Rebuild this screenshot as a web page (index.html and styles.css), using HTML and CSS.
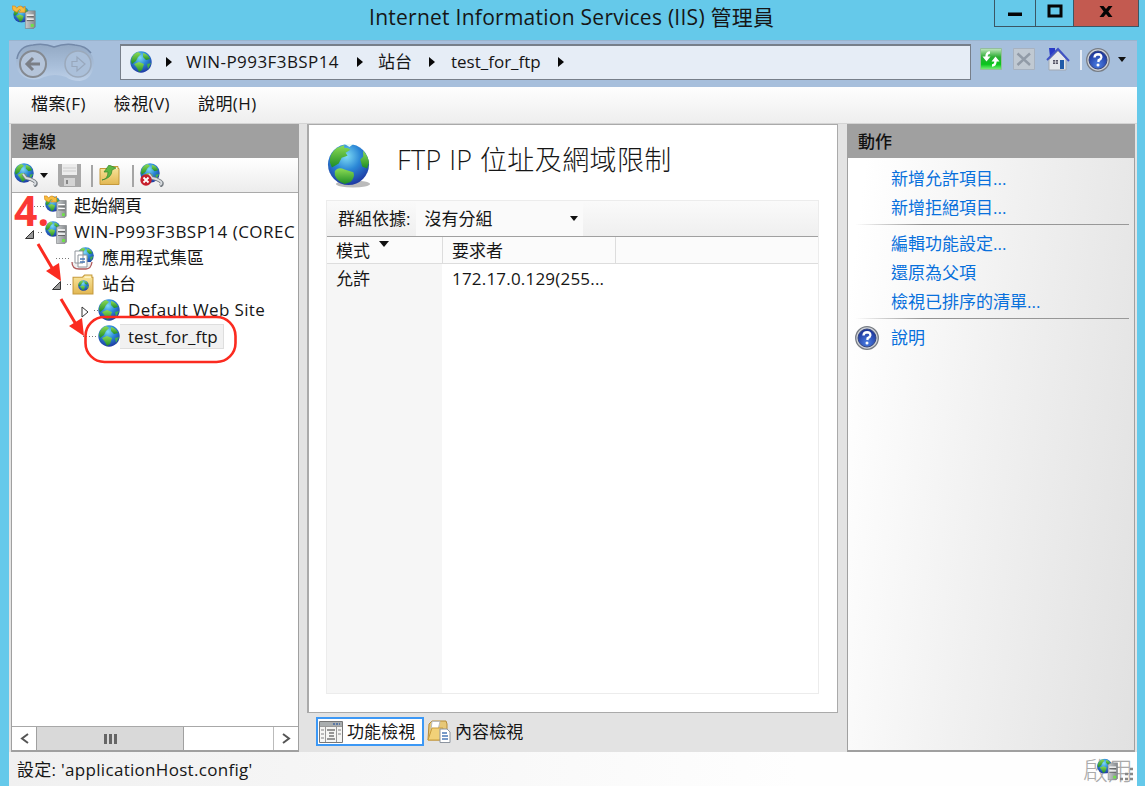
FILE: index.html
```html
<!DOCTYPE html>
<html lang="zh-Hant">
<head>
<meta charset="utf-8">
<title>Internet Information Services (IIS) 管理員</title>
<link rel="stylesheet" href="styles.css">
</head>
<body>
<svg class="defs" width="0" height="0">
  <defs>
    <radialGradient id="sea" cx=".45" cy=".3" r=".75"><stop offset="0" stop-color="#7fdcf5"/><stop offset=".45" stop-color="#2b87d6"/><stop offset="1" stop-color="#1c2f9c"/></radialGradient>
    <linearGradient id="land" x1="0" y1="0" x2="0" y2="1"><stop offset="0" stop-color="#8ddc55"/><stop offset="1" stop-color="#1d8c25"/></linearGradient>
    <linearGradient id="tower" x1="0" y1="0" x2="1" y2="0"><stop offset="0" stop-color="#c9ccce"/><stop offset="1" stop-color="#85898c"/></linearGradient>
    <linearGradient id="manila" x1="0" y1="0" x2="0" y2="1"><stop offset="0" stop-color="#fae79f"/><stop offset="1" stop-color="#e2b752"/></linearGradient>
    <linearGradient id="green" x1="0" y1="0" x2="0" y2="1"><stop offset="0" stop-color="#c3e8c0"/><stop offset=".4" stop-color="#2eae35"/><stop offset=".75" stop-color="#08c51b"/><stop offset="1" stop-color="#7df07c"/></linearGradient>
    <radialGradient id="blue" cx=".5" cy=".75" r=".7"><stop offset="0" stop-color="#4b7fe3"/><stop offset="1" stop-color="#1b3399"/></radialGradient>
    <linearGradient id="pod" x1="0" y1="0" x2="0" y2="1"><stop offset="0" stop-color="#93a9c4"/><stop offset=".6" stop-color="#a9bfda"/><stop offset="1" stop-color="#bdd0e8"/></linearGradient>
  </defs>
  <symbol id="globe" viewBox="0 0 44 44">
    <circle cx="22" cy="22" r="21" fill="url(#sea)"/>
    <path d="M3 20Q2 11 10 5L18 2Q16 6 21 5L24 7L19 10L21 13L15 15L12 21L5 25Z" fill="url(#land)"/>
    <path d="M37 8Q42 13 43 20L41 26L36 24L34 17L37 14Z" fill="url(#land)"/>
    <path d="M8 29Q11 24 18 27L27 30Q29 35 24 40L18 42Q10 39 8 33Z" fill="url(#land)"/>
    <path d="M18 1L23 4L27 1Z" fill="#e9fbf5"/>
  </symbol>
  <symbol id="small-globe" viewBox="0 0 22 22">
    <circle cx="11" cy="11" r="10.700" fill="url(#sea)"/>
    <path d="M1 10Q2 3 8 1L11 3L8 6L6 10L2 13Z" fill="url(#land)"/>
    <path d="M13 2Q18 3 20 8L16 9L13 6Z" fill="url(#land)"/>
    <path d="M4 13L9 11L14 13L12 19L9 21L7 17Z" fill="url(#land)"/>
    <path d="M17 13L21 12L18 18Z" fill="#43b049"/>
  </symbol>
  <symbol id="server" viewBox="0 0 11 19">
    <path d="M1 2L4 .5H10.500V17L9 18.500H.5V3Z" fill="url(#tower)" stroke="#777b7e" stroke-width=".6"/>
    <path d="M2 5H9M2 9H9" stroke="#fff" stroke-width="1.300"/><path d="M2 6.500H9M2 10.500H9" stroke="#555" stroke-width=".8"/>
    <path d="M6 14H9V17H6Z" fill="#6fe04a"/>
  </symbol>
  <symbol id="site-server" viewBox="0 0 23 23">
    <use href="#small-globe" x="1" y="0" width="16" height="16"/><use href="#server" x="12" y="4" width="11" height="19"/>
  </symbol>
  <symbol id="home-server" viewBox="0 0 23 23">
    <use href="#small-globe" x="1" y="1" width="16" height="16"/><use href="#server" x="12" y="5" width="11" height="18"/>
    <path d="M0 1H3L4.500 3Q8-1 11 3L12.500 1V7H6.500L8.500 5Q6.500 3 5 7L1 5Z" fill="#f7bd40" stroke="#dc8b1b" stroke-width=".7"/>
  </symbol>
  <symbol id="help" viewBox="0 0 24 24">
    <circle cx="12" cy="12" r="11.3" fill="#d0d3d8" stroke="#777c84" stroke-width="1.3"/><circle cx="12" cy="12" r="9" fill="url(#blue)" stroke="#35477f"/>
    <path d="M8.500 9.500Q8.700 6.300 12.200 6.300Q15.600 6.500 15.300 9.400Q15 11.300 12.700 12.200L12.300 14" fill="none" stroke="#fff" stroke-width="2.4"/><circle cx="12" cy="17" r="1.5" fill="#fff"/>
  </symbol>
  <symbol id="folder" viewBox="0 0 21 20">
    <path d="M1 3H10L12 1H19V3H20V19H1Z" fill="url(#manila)" stroke="#c5993b"/><path d="M12 3H18" stroke="#fff9df"/>
  </symbol>
  <symbol id="connect" viewBox="0 0 24 24">
    <use href="#small-globe" x="0" y="0" width="20" height="20"/>
    <path d="M9 11L12 15L16 16L20 18Q24 21 20 23" fill="none" stroke="#777d83" stroke-width="3.6"/><path d="M9 11L12 15L16 16L20 18Q23 20 20 22" fill="none" stroke="#d9dde0" stroke-width="1.9"/>
  </symbol>
</svg>

<div class="window">
  <header class="titlebar">
    <svg class="app-icon" width="24" height="24"><use href="#home-server"/></svg>
    <h1 class="title">Internet Information Services (IIS) 管理員</h1>
    <div class="controls">
      <div class="control minimize"><svg width="16" height="16"><path d="M1 12.500H15V16H1Z"/></svg></div>
      <div class="control maximize"><svg width="16" height="16"><path d="M2 4H14V14H2Z" fill="none" stroke="#050505" stroke-width="3"/></svg></div>
      <div class="control close"><svg width="16" height="16"><path d="M1.500 4H5.500L8 7L10.500 4H14.500L10.300 9.500L14.500 15H10.500L8 12L5.500 15H1.500L5.700 9.500Z"/></svg></div>
    </div>
  </header>

  <div class="frame">
    <nav class="address-row">
      <svg class="history" width="80" height="39" viewBox="0 0 80 39">
        <path d="M1 19Q1 5 18 2Q29 0 39 4Q50 0 60 2Q78 5 79 20Q78 36 65 38Q56 38 51 34Q40 30 29 34Q19 39 9 34Q1 29 1 19Z" fill="url(#pod)"/>
        <path d="M2 16Q4 3 18 2Q29 0 39 4Q50 0 60 2Q71 3 76 10" fill="none" stroke="#7389a9" stroke-width="1.5"/>
        <circle cx="18" cy="21" r="13" fill="#b5c5da" stroke="#858a91" stroke-width="2"/>
        <path d="M25 21H13M18 15L12 21L18 27" fill="none" stroke="#7b7f86" stroke-width="3"/>
        <circle cx="63" cy="21" r="13" fill="#abc0da" stroke="#9ba9bb" stroke-width="1.5"/>
        <path d="M57 18.500H62V14L70 21L62 28V23.500H57Z" fill="none" stroke="#98a7bc" stroke-width="1.200"/>
      </svg>
      <div class="address">
        <svg width="22" height="22"><use href="#small-globe"/></svg>
        <i class="tri"></i><span class="crumb crumb-host">WIN-P993F3BSP14</span>
        <i class="tri"></i><span class="crumb">站台</span>
        <i class="tri"></i><span class="crumb crumb-site">test_for_ftp</span>
        <i class="tri"></i>
      </div>
      <div class="quick">
        <svg width="22" height="22" viewBox="0 0 22 22"><path d="M.5 .5H21.500V21.500H.5Z" fill="url(#green)" stroke="#93bd9d"/><path d="M10 4.500Q6.500 4.500 6.500 9M12 17.500Q15.500 17.500 15.500 13" stroke="#fff" stroke-width="2.400" fill="none"/><path d="M2.500 8.500H10.500L6.500 13.500ZM11.500 13.500H19.500L15.500 8.500Z" fill="#fff"/></svg>
        <svg width="22" height="22" viewBox="0 0 22 22"><path d="M.5 .5H21.500V21.500H.5Z" fill="#c0c9d2" stroke="#a7b2c0"/><path d="M4.500 5.500L17 17M17 5.500L4.500 17" stroke="#919ba7" stroke-width="2.400"/></svg>
        <svg class="house" width="24" height="24" viewBox="0 0 24 24"><path d="M4 12L12 4L20 12V23H3V12Z" fill="#e5e8ec" stroke="#a1a8b2"/><path d="M3 1H9V6L4 10Z" fill="#293bc7"/><path d="M1 13L12 2L23 14" fill="none" stroke="#4052c4" stroke-width="2"/><path d="M7 13H12V17H7Z" fill="#556"/><path d="M14 13H18V22H14Z" fill="#205aa8"/><path d="M9.500 13V17M7 15H12" stroke="#fff" stroke-width=".6"/></svg>
        <i class="quick-divider"></i>
        <svg width="24" height="24"><use href="#help"/></svg>
        <i class="caret"></i>
      </div>
    </nav>

    <div class="menubar"><span>檔案(F)</span><span>檢視(V)</span><span>說明(H)</span></div>

    <main class="workspace">
      <section class="pane connections">
        <h2 class="pane-title">連線</h2>
        <div class="toolbar">
          <svg width="24" height="24"><use href="#connect"/></svg><i class="caret caret-small"></i>
          <svg class="save" width="23" height="23" viewBox="0 0 23 23"><path d="M0 0H23V23H2L0 21Z" fill="#a8a8a8"/><path d="M4 0H19V11H4Z" fill="#ececec"/><path d="M5 4H18M5 7H18" stroke="#ccc"/><path d="M6 14H17V22H6Z" fill="#d4d4d4"/><path d="M8 16H10V20H8Z" fill="#888"/></svg>
          <i class="tool-divider"></i>
          <svg class="up" width="21" height="21" viewBox="0 0 21 21"><use href="#folder" width="21" height="21"/><path d="M3 15Q9 14 9 7H5L10 0L17 3L13 5Q13 13 3 15Z" fill="#5cb743" stroke="#35862c" stroke-width=".7"/></svg>
          <i class="tool-divider"></i>
          <svg class="disconnect" width="24" height="24"><use href="#connect"/><circle cx="6" cy="17" r="5.700" fill="#c61f2c"/><path d="M3.500 14.500L8.500 19.500M8.500 14.500L3.500 19.500" stroke="#fff" stroke-width="1.800"/></svg>
        </div>
        <div class="tree">
          <div class="node level-1"><i class="dots"></i><svg width="23" height="23"><use href="#home-server"/></svg><span>起始網頁</span></div>
          <div class="node level-1 host"><svg class="open" width="9" height="9"><path d="M8.500 .5V8.500H.5Z"/></svg><i class="dots"></i><svg width="23" height="23"><use href="#site-server"/></svg><span>WIN-P993F3BSP14 (COREC</span></div>
          <div class="node level-2"><i class="dots"></i>
            <svg width="23" height="23" viewBox="0 0 23 23"><use href="#small-globe" x="6" y="0" width="17" height="17"/><path d="M1 15Q1 22 8 22H15Q20 22 21 15" fill="#eee" stroke="#b15b5d" stroke-width="1.300"/><path d="M4 4H12V16H4ZM7 8H16V20H7Z" fill="#fff" stroke="#8f959c"/><path d="M9 12H14M9 15H14" stroke="#4978b7" stroke-width="1.300"/></svg><span>應用程式集區</span></div>
          <div class="node level-2 sites"><svg class="open" width="9" height="9"><path d="M8.500 .5V8.500H.5Z"/></svg><i class="dots"></i><svg width="22" height="21"><use href="#folder" width="22" height="21"/><use href="#small-globe" x="6" y="6" width="11" height="11"/></svg><span>站台</span></div>
          <div class="node level-3 default"><svg class="open" width="8" height="12"><path d="M1 1L7 6L1 11Z" fill="#fff"/></svg><i class="dots"></i><svg width="22" height="22"><use href="#small-globe"/></svg><span>Default Web Site</span></div>
          <div class="node level-3"><i class="dots"></i><svg width="22" height="22"><use href="#small-globe"/></svg><span class="selected">test_for_ftp</span></div>
        </div>
        <div class="scrollbar">
          <div class="scroll-button"><svg width="9" height="11"><path d="M8 1L2 5.500L8 10"/></svg></div>
          <div class="thumb"><i></i><i></i><i></i></div>
          <div class="track"></div>
          <div class="scroll-button"><svg width="9" height="11"><path d="M1 1L7 5.500L1 10"/></svg></div>
        </div>
      </section>

      <section class="center">
        <div class="feature">
          <div class="feature-head"><svg width="44" height="46" viewBox="0 0 44 46"><ellipse cx="26" cy="41" rx="17" ry="3.500" fill="#bbb"/><use href="#globe" width="43" height="43"/></svg><h2>FTP IP 位址及網域限制</h2></div>
          <div class="list">
            <div class="group-row"><span>群組依據:</span><div class="combo"><span>沒有分組</span><i class="caret"></i></div></div>
            <div class="columns"><span class="col-mode">模式<i class="sort"></i></span><span class="col-client">要求者</span></div>
            <div class="rows"><span class="cell-mode">允許</span><span class="cell-client">172.17.0.129(255...</span></div>
          </div>
        </div>
        <div class="views">
          <div class="view active"><svg width="24" height="22" viewBox="0 0 24 22"><path d="M.5 .5H23.500V21.500H.5Z" fill="#f5f5f3" stroke="#777"/><path d="M1 1H23V5H1Z" fill="#a9adae"/><path d="M14 3H21" stroke="#5b78a5" stroke-width="2" stroke-dasharray="2 1"/><path d="M6.500 5V21M17.500 5V21M1 5.500H23" stroke="#999"/><path d="M8 9H16M10 12H15M10 15H15M8 18H16" stroke="#777" stroke-width="1.400"/><path d="M2 9H5M2 13H5M2 17H5M19 9H22M19 13H22" stroke="#bbb" stroke-width="2"/></svg><span>功能檢視</span></div>
          <div class="view"><svg width="24" height="23" viewBox="0 0 24 23"><path d="M2 4L5 1H19L20 4V20H1Z" fill="#e7c878" stroke="#b68c38"/><path d="M5 1.500H13L11 10H4Z" fill="#fff" stroke="#bbb"/><path d="M1 20L5 8H16L13 20Z" fill="#f2d178" stroke="#c99c3c"/><path d="M13 9H20L23 12V22.500H13Z" fill="#fff" stroke="#8c949f"/><path d="M15 13H20M15 16H21M15 19H21" stroke="#4b79b8" stroke-width="1.400"/></svg><span>內容檢視</span></div>
        </div>
      </section>

      <aside class="pane actions">
        <h2 class="pane-title">動作</h2>
        <div class="action-list">
          <a>新增允許項目...</a><a>新增拒絕項目...</a>
          <i class="rule"></i>
          <a>編輯功能設定...</a><a>還原為父項</a><a>檢視已排序的清單...</a>
          <i class="rule"></i>
          <a class="help-link"><svg width="24" height="24"><use href="#help"/></svg>說明</a>
        </div>
      </aside>
    </main>

    <footer class="status"><span>設定: 'applicationHost.config'</span>
      <div class="indicator"><span>啟用</span><svg class="status-icon" width="22" height="23"><use href="#site-server"/></svg><svg class="grip" width="16" height="16"><path d="M11 2h3M6 7h3M11 7h3M1 12h3M6 12h3M11 12h3" stroke="#888" stroke-width="2.500"/></svg></div>
    </footer>
  </div>

  <svg class="annotation" width="260" height="200" viewBox="0 170 260 200">
    <path d="M38 244L55 273M61 299L77 326" stroke="#fb2b20" stroke-width="3"/>
    <path d="M61 281L46 271L59 263ZM84 336L69 326L82 318Z" fill="#fb2b20"/>
    <rect x="85.500" y="317" width="150" height="45" rx="19" fill="none" stroke="#fb2b20" stroke-width="2.600"/>
    <text x="14" y="226">4.</text>
  </svg>
</div>
</body>
</html>
```
FILE: styles.css
```css
* { box-sizing: border-box; }
body { margin: 0; overflow: hidden; }
.defs { position: absolute; }
svg { flex: none; display: block; }
i { display: block; flex: none; }
h1, h2 { margin: 0; font-weight: 400; }
.window {
  position: relative;
  width: 1145px;
  height: 786px;
  background: #65c9ea;
  color: #161616;
  font: 17px/26px "Open Sans", "Noto Sans CJK TC", sans-serif;
  white-space: nowrap;
  display: flex;
  flex-direction: column;
}

/* Title bar */
.titlebar { height: 40px; flex: none; display: flex; align-items: flex-start; padding-left: 12px; }
.app-icon { margin-top: 5px; }
.title { width: 415px; margin-left: 333px; font-size: 21px; line-height: 35px; letter-spacing: .26px; }
.controls { display: flex; margin-left: auto; margin-right: 6px; height: 27px; border: 1px solid #3b5664; border-top: 0; }
.control { display: flex; justify-content: center; padding-top: 2px; border-right: 1px solid #3b5664; }
.control svg { fill: #050505; }
.minimize { width: 41px; padding-top: 0; }
.maximize { width: 38px; }
.close { width: 64px; background: #c35a50; border: 0; }

.frame { flex: 1; min-height: 0; display: flex; flex-direction: column; margin: 0 8px 0 9px; }

/* Address row */
.address-row { height: 47px; flex: none; display: flex; background: #a7bfdc; border-top: 1px solid #9ab4ce; padding-left: 6px; }
.history { margin-top: 2px; }
.address { display: flex; align-items: center; width: 851px; height: 36px; margin: 3px 0 0 25px; border: 2px solid #777f8a; border-width: 2px 1px 1px; background: #e6edf6; padding: 0 0 2px 9px; }
.tri { border: 5px solid transparent; border-left: 6px solid #080808; border-right: 0; margin-left: 14px; }
.crumb { margin-left: 15px; line-height: 26px; }
.crumb + .tri { margin-left: 17px; }
.crumb-host { width: 154px; margin-left: 14px; letter-spacing: .43px; }
.crumb-site { width: 90px; margin-left: 16px; }
.quick { display: flex; align-items: flex-start; padding: 7px 0 0 9px; }
.quick svg + svg { margin-left: 11px; }
.quick .house { margin-top: -1px; }
.quick-divider { width: 2px; height: 20px; margin: 2px 4px 0 10px; background: #e6edf6; }
.caret { border: 4px solid transparent; border-top: 5px solid #111; border-bottom: 0; }
.quick .caret { margin: 9px 0 0 8px; }

.menubar { height: 36px; flex: none; display: flex; gap: 28px; padding: 4px 0 0 22px; background: linear-gradient(#fefefe, #eee); font-size: 17px; letter-spacing: .4px; }

/* Panes */
.workspace { height: 629px; flex: none; display: flex; background: #e3e3e3; border-top: 1px solid #d4d4d4; padding-left: 2px; }
.pane { height: 628px; width: 288px; border: 1px solid #a0a0a0; border-bottom-width: 2px; display: flex; flex-direction: column; background: #fff; }
.pane-title { height: 33px; padding-left: 10px; background: #a0a0a0; color: #111; font-size: 17px; line-height: 34px; font-weight: 500; }
.toolbar { height: 35px; display: flex; align-items: center; padding: 0 0 0 2px; background: linear-gradient(#fff, #ececec); border-bottom: 1px solid #aaa; }
.caret-small { margin-left: 2px; }
.save { margin-left: 10px; }
.tool-divider { width: 2px; height: 22px; background: #a5a5a5; margin: 2px 0 0 10px; }
.up { margin: 0 2px 0 6px; }
.disconnect { margin-left: 6px; }
.tree { flex: 1; overflow: hidden; }
.node { height: 26px; display: flex; align-items: center; }
.node > span { margin-left: 7px; }
.dots { width: 10px; height: 1px; background: repeating-linear-gradient(90deg, #777 0 1px, transparent 1px 3px); }
.level-1 { padding-left: 22px; }
.level-2 { padding-left: 44px; }
.level-2 .dots { width: 15px; }
.level-2 > span { margin-left: 8px; }
.level-3 { padding-left: 71px; }
.level-3 .dots { width: 15px; }
.open { fill: #999; stroke: #333; stroke-width: 1; }
.host { padding-left: 13px; }
.host .open { margin-right: 4px; margin-top: 4px; }
.host .dots { width: 6px; }
.host > span { letter-spacing: .48px; }
.sites { padding-left: 40px; }
.sites .open { margin-right: 6px; margin-top: 3px; }
.sites .dots { width: 5px; }
.default { padding-left: 69px; }
.default .open { margin-right: 5px; margin-top: 4px; }
.default .dots { width: 4px; }
.default > span { margin-left: 8px; letter-spacing: .35px; }
.node > .selected { margin-left: 0; padding: 0 5px 0 8px; height: 25px; line-height: 24px; background: #f1f1f1; border: 1px solid #dedede; border-left: 0; }
.scrollbar { height: 24px; display: flex; border-top: 1px solid #a8a8a8; background: #fff; }
.scroll-button { width: 24px; display: flex; align-items: center; justify-content: center; }
.scroll-button svg { fill: none; stroke: #555; stroke-width: 2; }
.thumb { width: 148px; display: flex; align-items: center; justify-content: center; gap: 2px; background: #d9d9d9; border: 1px solid #a0a0a0; border-width: 0 1px; }
.thumb i { width: 3px; height: 10px; background: #666; }
.track { flex: 1; border-right: 1px solid #bbb; }

/* Feature page */
.center { width: 531px; margin: 0 9px 0 8px; display: flex; flex-direction: column; }
.feature { height: 589px; background: #fff; border: 1px solid #aaa; border-left-width: 2px; padding: 0 18px 18px 17px; display: flex; flex-direction: column; }
.feature-head { height: 75px; display: flex; padding: 18px 0 0 1px; }
.feature-head h2 { margin: -1px 0 0 26px; font-size: 27px; line-height: 36px; font-weight: 300; letter-spacing: .4px; }
.list { flex: 1; border: 1px solid #ececec; display: flex; flex-direction: column; }
.group-row { height: 36px; display: flex; padding-left: 11px; line-height: 35px; background: linear-gradient(#fafafa, #efefef); border-bottom: 1px solid #a0a0a0; }
.combo { width: 167px; margin-left: 6px; padding: 0 5px 0 8px; background: #fafafa; display: flex; align-items: center; justify-content: space-between; }
.columns { height: 27px; display: flex; background: #fbfbfb; border-bottom: 1px solid #ddd; line-height: 27px; }
.col-mode { width: 116px; padding-left: 9px; border-right: 1px solid #ddd; display: flex; gap: 9px; }
.sort { border: 5px solid transparent; border-top: 6px solid #111; border-bottom: 0; height: 6px; margin-top: 4px; }
.col-client { width: 173px; padding-left: 9px; border-right: 1px solid #ddd; }
.rows { flex: 1; display: flex; line-height: 30px; }
.cell-mode { width: 115px; padding-left: 9px; background: #f6f6f6; }
.cell-client { padding-left: 10px; letter-spacing: .2px; }
.views { display: flex; padding: 4px 0 0 9px; }
.view { display: flex; align-items: center; height: 29px; gap: 4px; padding-left: 3px; letter-spacing: .1px; }
.active { width: 108px; background: #fff; border: 2px solid #3c98f5; padding-left: 1px; }

/* Actions */
.action-list { flex: 1; padding: 6px 5px 0 7px; display: flex; flex-direction: column; background: linear-gradient(97deg, #fff 5%, #f1f1f1 48%, #e1e1e1); }
.action-list a { height: 29px; line-height: 29px; padding-left: 36px; color: #0870dc; }
.rule { height: 1px; margin: 2px 0 4px; background: linear-gradient(90deg, transparent, #939393 25%, #999); }
.action-list .help-link { display: flex; align-items: center; gap: 12px; padding-left: 0; }

/* Status */
.status { flex: 1; display: flex; justify-content: space-between; padding: 5px 2px 0 8px; background: linear-gradient(90deg, #f0f0f0, #fefefe 70%); letter-spacing: .3px; }
.indicator { position: relative; width: 52px; color: #aaa; font-size: 25px; font-weight: 300; line-height: 27px; letter-spacing: 0; }
.status-icon { position: absolute; left: 13px; top: 1px; }
.grip { position: absolute; right: 0; top: 10px; }

/* Callout marks drawn over the window */
.annotation { position: absolute; left: 0; top: 170px; }
.annotation text { font: 700 41px "Open Sans", sans-serif; fill: #fb3835; }
```
